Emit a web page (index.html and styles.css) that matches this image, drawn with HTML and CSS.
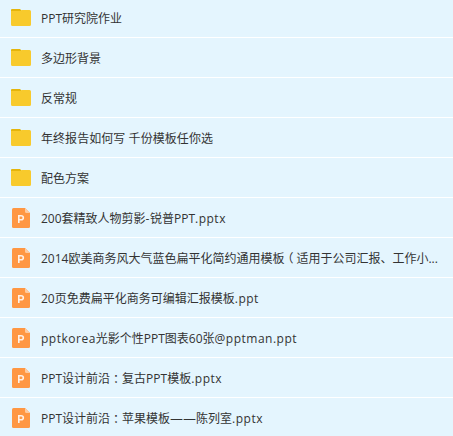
FILE: index.html
```
<!DOCTYPE html>
<html lang="zh-CN">
<head>
	<meta charset="UTF-8">
	<title>文件列表</title>
	<link rel="stylesheet" href="styles.css">
</head>
<body>
	<svg class="defs">
		<symbol id="folder" viewBox="0 0 20 17">
			<path fill="#e5b50b" d="M0 1Q0 0 1 0H9l1 1v4H0z"/>
			<path fill="#f8ca2c" d="M0 2H9.500l1-1H18.500Q20 1 20 2.500V15.500Q20 17 18.500 17H1.500Q0 17 0 15.500z"/>
		</symbol>
		<symbol id="ppt" viewBox="0 0 18 20">
			<path fill="#ff9743" d="M1.500 0H13l5 5v13.500Q18 20 16.500 20h-15Q0 20 0 18.500v-17Q0 0 1.500 0z"/>
			<path fill="#ffcba1" d="M13 0l5 5h-3.500Q13 5 13 3.500z"/>
			<path fill="none" stroke="#fff2e8" stroke-width="1.600" d="M6.800 15V7.800h2.300q2.200 0 2.200 2t-2.200 2h-2.300"/>
		</symbol>
	</svg>
	<ul class="list">
		<li><svg class="folder"><use href="#folder"/></svg><span class="name">PPT研究院作业</span></li>
		<li><svg class="folder"><use href="#folder"/></svg><span class="name">多边形背景</span></li>
		<li><svg class="folder"><use href="#folder"/></svg><span class="name">反常规</span></li>
		<li><svg class="folder"><use href="#folder"/></svg><span class="name wide">年终报告如何写 千份模板任你选</span></li>
		<li><svg class="folder"><use href="#folder"/></svg><span class="name">配色方案</span></li>
		<li><svg class="ppt"><use href="#ppt"/></svg><span class="name">200套精致人物剪影<i>-</i>锐普PPT<i>.pptx</i></span></li>
		<li><svg class="ppt"><use href="#ppt"/></svg><span class="name">2014欧美商务风大气蓝色扁平化简约通用模板<span class="paren">（</span>适用于公司汇报、工作小...</span></li>
		<li><svg class="ppt"><use href="#ppt"/></svg><span class="name">20页免费扁平化商务可编辑汇报模板<i>.ppt</i></span></li>
		<li><svg class="ppt"><use href="#ppt"/></svg><span class="name"><i>pptkorea</i>光影个性PPT图表60张<i>@pptman.ppt</i></span></li>
		<li><svg class="ppt"><use href="#ppt"/></svg><span class="name">PPT设计前沿<b lang="zh-TW">：</b>复古PPT模板<i>.pptx</i></span></li>
		<li><svg class="ppt"><use href="#ppt"/></svg><span class="name">PPT设计前沿<b lang="zh-TW">：</b>苹果模板<span class="dash">——</span>陈列室<i>.pptx</i></span></li>
	</ul>
</body>
</html>
```

FILE: styles.css
```
*{
	margin:0;
	padding:0;
	box-sizing:border-box;
}
body{
	height:436px;
	overflow:hidden;
	background:#e4f5fe;
	color:#333;
	font:12px/18px "Open Sans","Noto Sans CJK SC",sans-serif;
}
.defs{
	display:none;
}
.list{
	list-style:none;
}
.list li{
	display:flex;
	align-items:center;
	height:40px;
	padding-left:11px;
	border-bottom:1px solid #fff;
}
/* 第一行上边被裁掉2px */
.list li:first-child{
	height:38px;
	padding-bottom:2px;
}
.folder{
	width:20px;
	height:17px;
	margin:0 10px 0 0;
}
.ppt{
	width:18px;
	height:20px;
	margin:1px 11px 0 1px;
}
.name{
	white-space:nowrap;
	padding-top:2px;
}
.wide{
	letter-spacing:.06px;
}
.name i{
	font-style:normal;
	letter-spacing:.5px;
}
/* 冒号居中 */
.name b{
	font-weight:normal;
	font-family:"Noto Sans CJK TC",sans-serif;
	line-height:1;
	vertical-align:-1px;
}
/* 半宽括号，两边各留3px */
.paren{
	margin:0 3px;
	font-family:"Noto Sans CJK SC",sans-serif;
	font-feature-settings:"halt";
}
.dash{
	font:13px/16px "DejaVu Sans",sans-serif;
}
```
